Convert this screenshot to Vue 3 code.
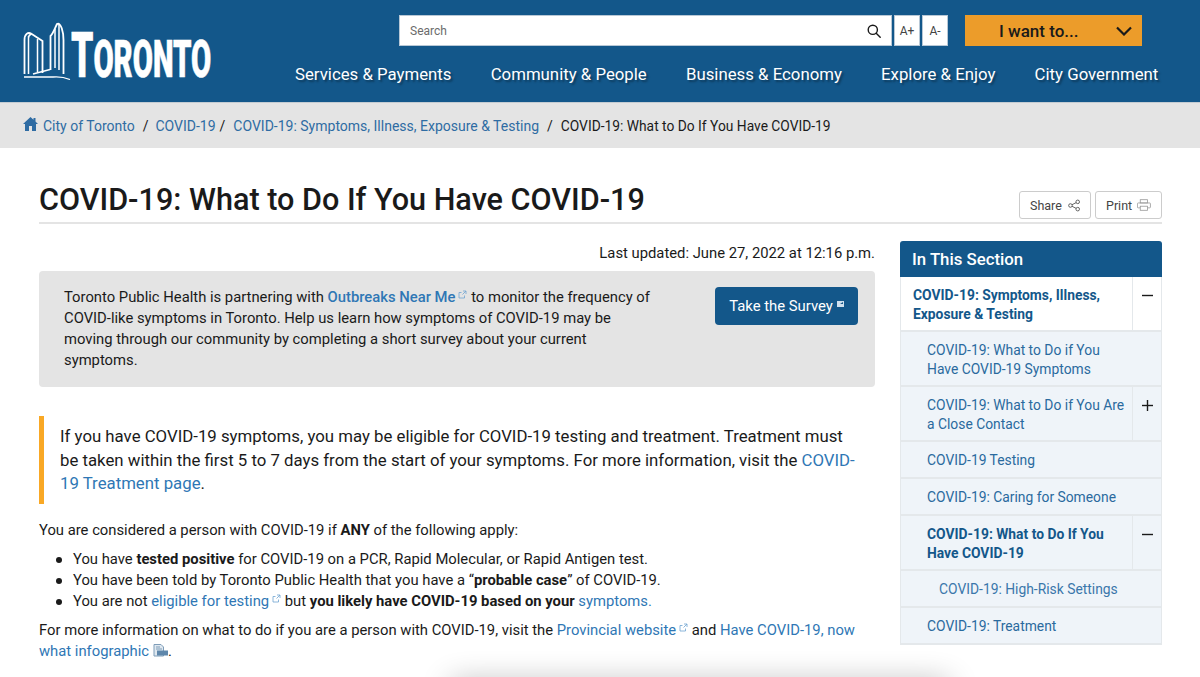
<script setup>
const nav = ['Services & Payments', 'Community & People', 'Business & Economy', 'Explore & Enjoy', 'City Government']
const items = [
  { id: 1, lines: 'COVID-19: What to Do if You Have COVID-19 Symptoms', cls: 'sub two pad' },
  { id: 2, lines: 'COVID-19: What to Do if You Are a Close Contact', cls: 'sub two', toggle: 'plus' },
  { id: 3, lines: 'COVID-19 Testing', cls: 'sub' },
  { id: 4, lines: 'COVID-19: Caring for Someone', cls: 'sub' },
  { id: 5, lines: 'COVID-19: What to Do If You Have COVID-19', cls: 'sub two current', toggle: 'minus' },
  { id: 6, lines: 'COVID-19: High-Risk Settings', cls: 'sub deep' },
  { id: 7, lines: 'COVID-19: Treatment', cls: 'sub' }
]
</script>

<template>
  <div class="page">
    <header class="head">
      <a class="logo">
        <svg width="48" height="58" viewBox="0 0 48 58" fill="none" stroke="#fff" stroke-width="1.800">
          <path d="M1.500 52V18C1.500 12 5 10 8 11.500L19.500 19V51" />
          <path d="M5.500 52V14M8.500 12C6 13 5.500 14 5.500 16M14.500 17V50" stroke-width="1.500"/>
          <path d="M27.500 48V14C30 12 32 6 34 2C38 0 40.500 10 40.500 18V52" />
          <path d="M32 7V46M36 3V48" stroke-width="1.500"/>
          <path d="M10 52L27 47.500" stroke-width="1.500"/>
          <path d="M1 55H30C36 54.500 42 55.500 47 57.500" stroke-width="1.300"/>
        </svg>
        <span class="wordmark"><span class="big">T</span>ORONTO</span>
      </a>
      <div class="head-right">
        <div class="tools">
          <div class="search">
            <span class="search-text">Search</span>
            <span class="search-btn">
              <svg width="14" height="14" viewBox="0 0 14 14" fill="none" stroke="#1a1a1a" stroke-width="1.400"><circle cx="5.800" cy="5.800" r="4.600"/><path d="M9.200 9.200l4 4" stroke-linecap="round"/></svg>
            </span>
          </div>
          <span class="size">A+</span>
          <span class="size">A-</span>
          <div class="want">
            <span>I want to...</span>
            <svg class="chev" width="16" height="10" viewBox="0 0 16 10" fill="none" stroke="#1a1a1a" stroke-width="2.200"><path d="M1 1.500l7 7 7-7"/></svg>
          </div>
        </div>
        <nav class="nav">
          <a v-for="n in nav" :key="n">{{ n }}</a>
        </nav>
      </div>
    </header>

    <div class="crumbs">
      <svg class="home" width="15" height="14" viewBox="0 0 15 14" fill="#2f6ca3"><path d="M7.500 0L0 7h2v7h4V9h3v5h4V7h2l-2.500-2.400V1h-2v1.700z"/></svg>
      <a>City of Toronto</a><i class="sep1">/</i>
      <a>COVID-19</a><i class="sep2">/</i>
      <a>COVID-19: Symptoms, Illness, Exposure &amp; Testing</a><i class="sep3">/</i>
      <span class="last">COVID-19: What to Do If You Have COVID-19</span>
    </div>

    <main class="main">
      <div class="title-row">
        <h1>COVID-19: What to Do If You Have COVID-19</h1>
        <div class="actions">
          <span class="act share">Share
            <svg width="15" height="15" viewBox="0 0 15 15" fill="none" stroke="#444" stroke-width="1"><circle cx="3" cy="7.500" r="2.200"/><circle cx="12" cy="3" r="2.200"/><circle cx="12" cy="12" r="2.200"/><path d="M5 6.500L10 4M5 8.500L10 11"/></svg>
          </span>
          <span class="act print">Print
            <svg width="17" height="14" viewBox="0 0 17 14" fill="none" stroke="#999" stroke-width="1"><rect x="4" y="0.500" width="9" height="4"/><rect x="0.500" y="4.500" width="16" height="6" rx="1"/><rect x="4" y="8.500" width="9" height="5" fill="#fff"/></svg>
          </span>
        </div>
      </div>

      <div class="columns">
        <div class="content">
          <p class="updated">Last updated: June 27, 2022 at 12:16 p.m.</p>
          <div class="notice">
            <p>Toronto Public Health is partnering with <a class="strong-link">Outbreaks Near Me</a><svg class="ext" width="9" height="9" viewBox="0 0 9 9" fill="none" stroke="#6fa3d0" stroke-width="0.800"><path d="M6.500 5.500V8H1V2.500h2.500M5 1h3v3M8 1L4.500 4.500"/></svg> to monitor the frequency of COVID-like symptoms in Toronto. Help us learn how symptoms of COVID-19 may be moving through our community by completing a short survey about your current symptoms.</p>
            <a class="survey">Take the Survey<svg width="7" height="7" viewBox="0 0 7 7"><rect width="7" height="6" fill="#cfe0ee"/><path d="M3 3l3-2v2z" fill="#13578a"/></svg></a>
          </div>
          <blockquote class="callout">If you have COVID-19 symptoms, you may be eligible for COVID-19 testing and treatment. Treatment must be taken within the first 5 to 7 days from the start of your symptoms. For more information, visit the <a>COVID-19 Treatment page</a>.</blockquote>
          <p class="intro">You are considered a person with COVID-19 if <b>ANY</b> of the following apply:</p>
          <ul>
            <li>You have <b>tested positive</b> for COVID-19 on a PCR, Rapid Molecular, or Rapid Antigen test.</li>
            <li>You have been told by Toronto Public Health that you have a “<b>probable case</b>” of COVID-19.</li>
            <li>You are not <a>eligible for testing</a><svg class="ext" width="9" height="9" viewBox="0 0 9 9" fill="none" stroke="#6fa3d0" stroke-width="0.800"><path d="M6.500 5.500V8H1V2.500h2.500M5 1h3v3M8 1L4.500 4.500"/></svg> but <b>you likely have COVID-19 based on your</b> <a>symptoms.</a></li>
          </ul>
          <p class="more">For more information on what to do if you are a person with COVID-19, visit the <a>Provincial website</a><svg class="ext" width="9" height="9" viewBox="0 0 9 9" fill="none" stroke="#6fa3d0" stroke-width="0.800"><path d="M6.500 5.500V8H1V2.500h2.500M5 1h3v3M8 1L4.500 4.500"/></svg> and <a>Have COVID-19, now what infographic</a><svg class="pdf" width="15" height="13" viewBox="0 0 15 13"><path d="M1 .5h7l2.500 2.500V12H1z" fill="#dfe8f0" stroke="#7f9db8"/><path d="M3 3h4M3 5h6" stroke="#7f9db8"/><rect x="4" y="6.500" width="11" height="5" fill="#5f87ab"/></svg>.</p>
        </div>

        <aside class="side">
          <div class="side-head">In This Section</div>
          <div class="row top">
            <a class="row-link">COVID-19: Symptoms, Illness, Exposure &amp; Testing</a>
            <span class="toggle"><svg width="11" height="11" viewBox="0 0 11 11" stroke="#1a1a1a" stroke-width="1.400"><path d="M0 5.500h11"/></svg></span>
          </div>
          <div v-for="it in items" :key="it.id" class="row" :class="it.cls">
            <a class="row-link">{{ it.lines }}</a>
            <span v-if="it.toggle" class="toggle">
              <svg width="11" height="11" viewBox="0 0 11 11" stroke="#1a1a1a" stroke-width="1.400"><path d="M0 5.500h11"/><path v-if="it.toggle === 'plus'" d="M5.500 0v11"/></svg>
            </span>
          </div>
        </aside>
      </div>
    </main>
    <div class="floating"></div>
  </div>
</template>

<style>
html, body { margin: 0; background: #fff; }
</style>

<style scoped>
.page {
  position: relative;
  width: 1200px;
  height: 677px;
  overflow: hidden;
  font-family: Roboto, "Liberation Sans", sans-serif;
  color: #1a1a1a;
  background: #fff;
}
a { color: #2f77b5; }
.head {
  height: 102px;
  box-sizing: border-box;
  background: #13578a;
  display: flex;
  padding: 15px 0 0 23px;
}
.logo {
  width: 272px;
  flex: none;
  display: flex;
  align-items: flex-start;
  padding-top: 7px;
  color: #fff;
}
.logo svg { flex: none; }
.wordmark {
  display: inline-block;
  margin-top: 6px;
  margin-left: 0;
  font: 900 52px/56px Roboto, sans-serif;
  -webkit-text-stroke: 0.6px #fff;
  transform: scaleX(0.563);
  transform-origin: left top;
  white-space: nowrap;
}
.wordmark .big { font-size: 63px; }
.head-right { flex: 1; }
.tools { display: flex; align-items: stretch; height: 31px; padding-left: 104px; }
.search {
  width: 493px;
  box-sizing: border-box;
  background: #fff;
  border: 1px solid #b8c8d6;
  display: flex;
  justify-content: space-between;
  align-items: center;
}
.search-text { font-size: 12px; color: #6b6b6b; padding-left: 10px; padding-top: 1px; }
.search-btn { width: 34px; display: flex; justify-content: center; }
.size {
  width: 26px;
  margin-left: 2px;
  box-sizing: border-box;
  background: #fff;
  border: 1px solid #b8c8d6;
  font-size: 12px;
  color: #444;
  display: flex;
  align-items: center;
  justify-content: center;
}
.want {
  margin-left: 17px;
  width: 177px;
  box-sizing: border-box;
  background: #ec9c2a;
  font-size: 17px;
  font-weight: 500;
  color: #1a1a1a;
  display: flex;
  align-items: center;
  padding-left: 34px;
}
.chev { margin-left: 38px; }
.nav { display: flex; gap: 39.200px; margin-top: 17px; }
.nav a {
  color: #fff;
  font-size: 16.800px;
  line-height: 22px;
  white-space: nowrap;
  text-shadow: 2px 2px 2px rgba(0, 0, 0, .35);
}
.crumbs {
  height: 46px;
  box-sizing: border-box;
  background: #e4e4e4;
  border-top: 1px solid #c4ccd2;
  display: flex;
  align-items: center;
  padding-left: 23px;
  font-size: 14px;
  white-space: nowrap;
}
.crumbs a { color: #2f6ca3; }
.last { font-size: 13.800px; }
.home { margin-right: 5px; margin-top: -3px; }
.crumbs i { font-style: normal; color: #1a1a1a; }
.sep1 { margin: 0 7px 0 8px; }
.sep2 { margin: 0 8px 0 4px; }
.sep3 { margin: 0 8px; }
.main { padding: 0 38px 0 39px; }
.title-row {
  height: 76px;
  box-sizing: border-box;
  border-bottom: 2px solid #e4e4e4;
  display: flex;
  justify-content: space-between;
  align-items: flex-end;
}
h1 {
  margin: 0 0 3px;
  font-size: 30.600px;
  font-weight: 500;
  line-height: 38px;
}
.actions { display: flex; gap: 4px; margin-bottom: 3px; }
.act {
  height: 28px;
  box-sizing: border-box;
  border: 1px solid #ccc;
  border-radius: 3px;
  font-size: 12.500px;
  color: #444;
  display: flex;
  align-items: center;
  gap: 6px;
  padding: 0 10px;
}
.share { width: 72px; }
.print { width: 67px; gap: 5px; }
.columns { display: flex; justify-content: space-between; padding-top: 17px; }
.content { width: 836px; }
.updated {
  margin: 1px 0 0;
  text-align: right;
  font-size: 14.800px;
  line-height: 22px;
}
.notice {
  margin-top: 7px;
  height: 116px;
  box-sizing: border-box;
  background: #e4e4e4;
  border-radius: 4px;
  display: flex;
  align-items: flex-start;
  padding: 16px 17px 0 25px;
  justify-content: space-between;
}
.notice p { margin: 0; width: 590px; font-size: 14.800px; line-height: 21px; }
.strong-link { font-weight: 500; color: #2f77b5; }
.ext { margin-left: 3px; vertical-align: 3px; }
.survey {
  width: 143px;
  height: 38px;
  box-sizing: border-box;
  background: #13578a;
  border-radius: 4px;
  color: #fff;
  font-size: 14.850px;
  display: flex;
  align-items: center;
  justify-content: center;
  gap: 4px;
}
.survey svg { margin-top: -3px; }
.callout {
  margin: 29px 0 0;
  height: 88px;
  box-sizing: border-box;
  border-left: 5px solid #f9a825;
  padding: 9px 10px 0 16px;
  font-size: 16.800px;
  line-height: 23.700px;
}
.intro { margin: 16px 0 0; font-size: 14.800px; line-height: 21px; }
ul { list-style: none; margin: 8px 0 0; padding-left: 34px; font-size: 14.800px; line-height: 20.800px; }
li { position: relative; }
li::before {
  content: '';
  position: absolute;
  left: -17px;
  top: 8px;
  width: 6px;
  height: 6px;
  border-radius: 50%;
  background: #1a1a1a;
}
b { font-weight: 700; }
.more { margin: 9px 0 0; font-size: 14.800px; line-height: 20.600px; width: 830px; }
.pdf { margin-left: 4px; vertical-align: -1px; }
.side { width: 262px; flex: none; font-size: 13.850px; line-height: 18.600px; }
.side-head {
  height: 36px;
  box-sizing: border-box;
  background: #13578a;
  border-radius: 3px 3px 0 0;
  color: #fff;
  font-size: 16.800px;
  font-weight: 500;
  padding-left: 12px;
  display: flex;
  align-items: center;
}
.row {
  display: flex;
  background: #eff4f9;
  border: 1px solid #e4e8eb;
  border-top: 0;
  border-bottom: 2px solid #e4e8eb;
  box-sizing: border-box;
  height: 37px;
  align-items: stretch;
}
.row.two { height: 55px; }
.row.top { background: #fff; height: 55px; }
.row-link {
  flex: 1;
  padding: 2px 2px 0 26px;
  color: #2a6a9e;
  align-self: center;
}
.pad .row-link { padding-right: 36px; }
.top .row-link { padding-left: 12px; font-weight: 700; color: #13578a; }
.current .row-link { font-weight: 700; color: #13578a; }
.deep .row-link { padding-left: 38px; color: #3a77ab; }
.toggle {
  width: 29px;
  flex: none;
  border-left: 1px solid #e4e8eb;
  padding-top: 13px;
  box-sizing: border-box;
  text-align: center;
}
.toggle svg { display: block; margin: 0 auto; }
.floating {
  position: absolute;
  left: 450px;
  top: 682px;
  width: 500px;
  height: 20px;
  border-radius: 8px;
  box-shadow: 0 0 30px rgba(0, 0, 0, .3);
}
</style>
